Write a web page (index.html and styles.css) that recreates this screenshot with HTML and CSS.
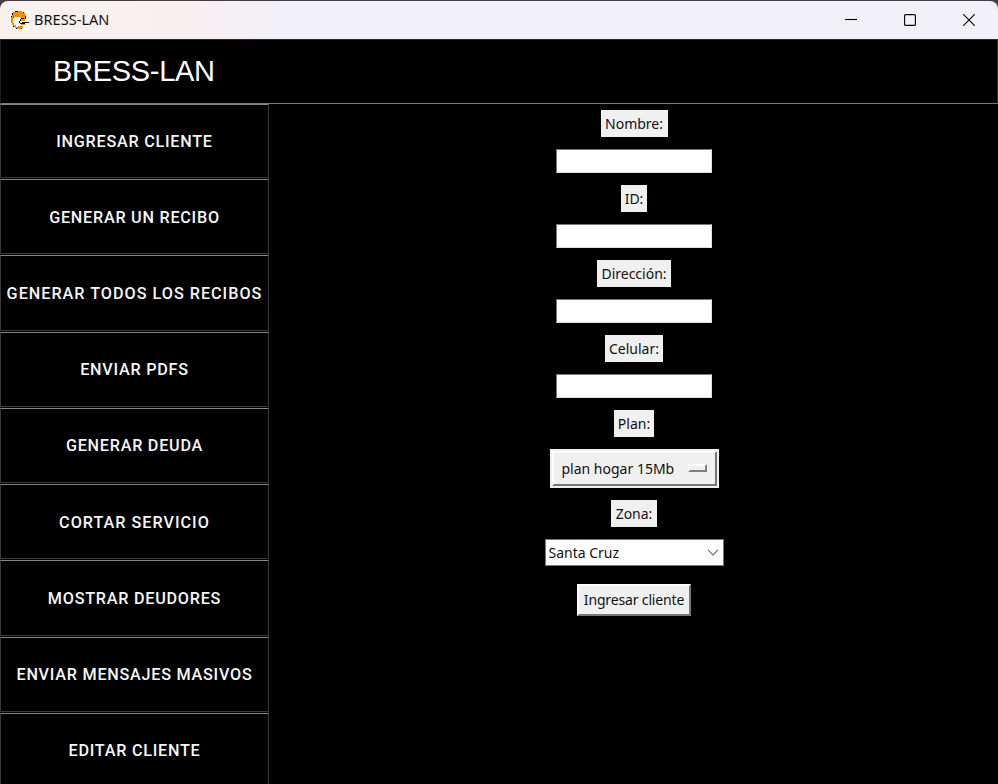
FILE: index.html
```html
<!DOCTYPE html>
<html lang="es">
<head>
<meta charset="utf-8">
<title>BRESS-LAN</title>
<link rel="stylesheet" href="styles.css">
</head>
<body>
<div class="window">
  <header class="titlebar">
    <svg class="app-icon" viewBox="0 0 20 20" shape-rendering="crispEdges">
      <path fill="#fff" d="M0 0h20v20H0z"/>
      <path fill="#ff8a00" d="M6 1h7v1h2v1h1v2h1v4h-4V8h-2V7H5v1H4v2H3v3h1v2h1v1h2v1h4v1h2v1H8v-1H6v-1H4v-2H3v-2H2V6h1V4h1V2h2z"/>
      <path fill="#fff" d="M5 8h5v4h2v3h-2v1H7v-1H5v-2H4v-3h1z"/>
      <path fill="#ff8a00" d="M3 8h1v5H3zM4 13h1v2H4zM5 15h2v1H5zM12 9h4v2h-4zM12 14h4v1h-4zM9 16h5v2H9z"/>
      <path fill="#111" d="M6 1h3v1H6zM3 3h1v2H3zM2 6h1v1H2zM14 2h1v1h-1zM16 6h1v3h-1zM4 7h1v1H4zM12 8h3v1h-3zM11 9h1v2h-1zM10 11h1v2h-1zM13 12h7v1h-7zM11 13h5v1h-5zM4 16h1v1H4zM7 18h1v1H7zM12 18h1v1h-1z"/>
    </svg>
    <span class="app-title">BRESS-LAN</span>
    <div class="controls">
      <svg viewBox="0 0 12 12"><path d="M0 5.5h12"/></svg>
      <svg viewBox="0 0 12 12"><rect x=".6" y=".6" width="10.8" height="10.8" rx="1"/></svg>
      <svg viewBox="0 0 12 12"><path d="M.3.3l11.4 11.4M11.7.3L.3 11.7"/></svg>
    </div>
  </header>
  <div class="banner"><h1>BRESS-LAN</h1></div>
  <div class="content">
    <nav class="sidebar">
      <button class="nav">INGRESAR CLIENTE</button>
      <button class="nav">GENERAR UN RECIBO</button>
      <button class="nav wide">GENERAR TODOS LOS RECIBOS</button>
      <button class="nav">ENVIAR PDFS</button>
      <button class="nav">GENERAR DEUDA</button>
      <button class="nav wide">CORTAR SERVICIO</button>
      <button class="nav">MOSTRAR DEUDORES</button>
      <button class="nav">ENVIAR MENSAJES MASIVOS</button>
      <button class="nav">EDITAR CLIENTE</button>
    </nav>
    <form class="form">
      <label class="label name">Nombre:</label>
      <input class="entry" type="text">
      <label class="label id">ID:</label>
      <input class="entry" type="text">
      <label class="label address">Dirección:</label>
      <input class="entry" type="text">
      <label class="label phone">Celular:</label>
      <input class="entry" type="text">
      <label class="label plan">Plan:</label>
      <div class="option"><div class="option-face"><span>plan hogar 15Mb</span><i class="indicator"></i></div></div>
      <label class="label zone">Zona:</label>
      <div class="combo"><span>Santa Cruz</span><svg class="chevron" viewBox="0 0 12 7"><path d="M1 .8l5 5 5-5"/></svg></div>
      <button class="submit" type="button">Ingresar cliente</button>
    </form>
  </div>
</div>
</body>
</html>
```
FILE: styles.css
```css
* { box-sizing: border-box; }
body { margin: 0; background: #443f45; overflow: hidden; }
.window {
  width: 998px;
  height: 784px;
  padding-top: 1px;
  display: flex;
  flex-direction: column;
  font-family: "Noto Sans", "Open Sans", sans-serif;
  font-size: 14px;
}
.titlebar {
  height: 38px;
  flex: none;
  display: flex;
  align-items: center;
  padding: 0 23px 0 9px;
  border-radius: 8px 8px 0 0;
  background: linear-gradient(90deg, #f9f1ee 0, #f9eff1 180px, #f1f1f7 280px);
}
.app-icon { width: 20px; height: 20px; }
.app-title { margin: -2px 0 0 5px; font-size: 14.5px; letter-spacing: .05px; color: #111; }
.controls { margin-left: auto; display: flex; gap: 47px; }
.controls svg { width: 12px; height: 12px; fill: none; stroke: #000; stroke-width: 1.1; }
.banner {
  height: 65px;
  flex: none;
  background: #000;
  border-top: 1px solid #2c2c2c;
  border-left: 1px solid #1c1c1c;
  border-right: 1px solid #333;
  border-bottom: 1px solid #7c7c7c;
  padding: 14px 0 0 52px;
}
h1 { margin: 0; font: 400 29px/34px "Liberation Sans", sans-serif; letter-spacing: -.3px; color: #fff; }
.content { flex: 1; min-height: 0; display: flex; background: #000; }
.sidebar {
  width: 269px;
  display: grid;
  grid-template-rows: 74px;
  grid-auto-rows: 75.25px;
  row-gap: 1px;
  overflow: hidden;
}
.nav {
  padding: 1px 0 0;
  background: #000;
  border: 1px solid #383838;
  border-top-color: #858585;
  color: #f6f6f6;
  font: 500 16.2px "Roboto", sans-serif;
  letter-spacing: .75px;
  white-space: nowrap;
}
.nav.wide { letter-spacing: 1px; }
.form { flex: 1; display: flex; flex-direction: column; align-items: center; padding: 6px 0 0 1px; gap: 12px; color: #111; }
.label { height: 27px; line-height: 27px; background: #f0f0f0; text-align: center; letter-spacing: 0; }
.name { width: 67px; }
.id { width: 26px; }
.address { width: 74px; }
.phone { width: 58px; }
.plan { width: 40px; }
.zone { width: 46px; }
.entry { width: 156px; height: 24px; padding: 2px; border: 1px solid; border-color: #777 #ddd #ddd #777; background: #fff; outline: 0; }
.option { width: 169px; height: 39px; background: #f0f0f0; padding: 2px; }
.option-face {
  height: 35px;
  display: flex;
  align-items: center;
  justify-content: space-between;
  padding: 0 8px;
  border: 2px solid;
  border-color: #fff #777 #777 #fff;
}
.indicator { width: 19px; height: 8px; margin-top: -2px; border: 2px solid; border-color: #fff #808080 #808080 #fff; }
.combo { width: 179px; height: 27px; display: flex; align-items: center; justify-content: space-between; padding: 0 4px 0 3px; border: 1px solid #777; background: #fff; }
.chevron { width: 12px; height: 7px; fill: none; stroke: #707070; stroke-width: 1.2; }
.submit { margin-top: 6px; width: 114px; height: 32px; padding: 0 0 2px; border: 2px solid; border-color: #fff #777 #777 #fff; background: #f0f0f0; font: inherit; color: #111; letter-spacing: -.15px; }
```
